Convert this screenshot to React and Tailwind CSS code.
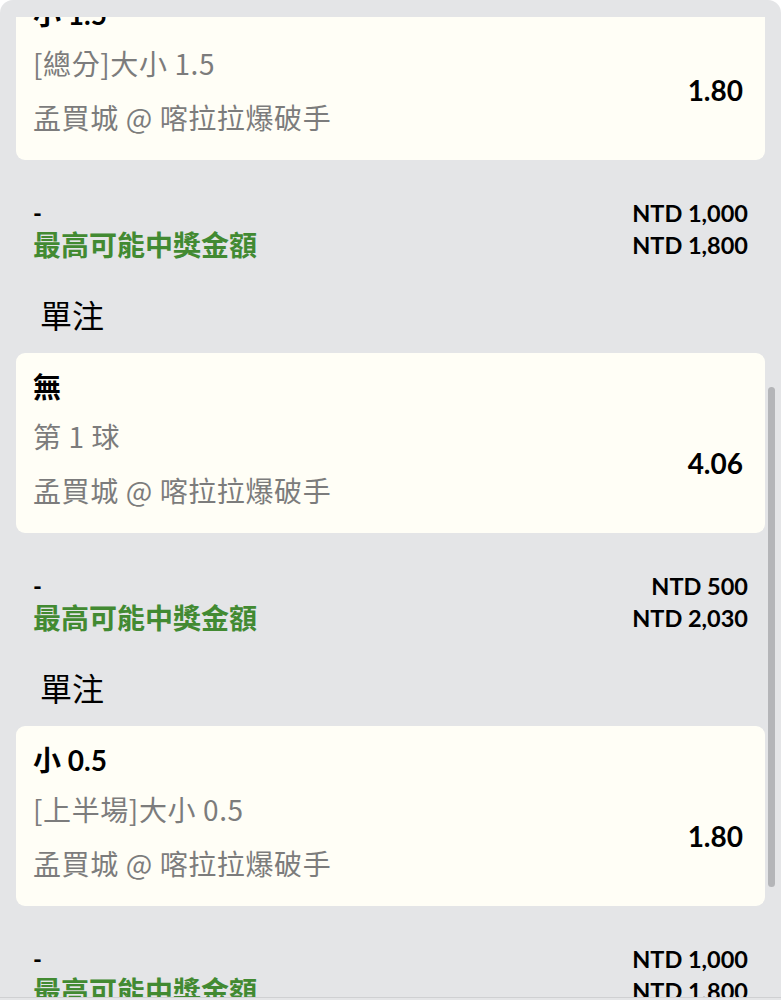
import React from 'react';

const latin = { fontFamily: 'Lato, "Noto Sans CJK TC", sans-serif' };
const cjk = { fontFamily: '"Noto Sans CJK TC", "Noto Sans", sans-serif' };

const bets = [
  { title: '小 1.5', market: '[總分]大小 1.5', odds: '1.80', stake: 'NTD 1,000', win: 'NTD 1,800' },
  { title: '無', market: '第 1 球', odds: '4.06', stake: 'NTD 500', win: 'NTD 2,030' },
  { title: '小 0.5', market: '[上半場]大小 0.5', odds: '1.80', stake: 'NTD 1,000', win: 'NTD 1,800' },
];

const BetCard = ({ title, market, odds }) => (
  <div className="mx-4 rounded-[9px] bg-[#fffef6] pb-[23px] pl-[17px] pr-[22px] pt-[14px]">
    <div className="text-[28px] font-bold leading-[40px] text-black" style={latin}>
      {title}
    </div>
    <div className="mt-[9px] flex items-center justify-between">
      <div className="text-[28px] leading-[40px] tracking-[0.6px] text-[#7c7c7c]" style={cjk}>
        <div>{market}</div>
        <div className="mt-[14px]">孟買城 @ 喀拉拉爆破手</div>
      </div>
      <div className="text-[28px] font-bold text-black" style={latin}>
        {odds}
      </div>
    </div>
  </div>
);

const Summary = ({ stake, win }) => (
  <div className="mt-[37px] flex justify-between px-[33px] text-black" style={latin}>
    <div>
      <div className="text-[24px] font-bold leading-[32px]">-</div>
      <div className="text-[28px] font-bold leading-[32px] text-[#428a32]">最高可能中獎金額</div>
    </div>
    <div className="text-right text-[23.5px] font-bold leading-[32px]">
      <div>{stake}</div>
      <div>{win}</div>
    </div>
  </div>
);

export default function App() {
  return (
    <div className="h-[1000px] w-full overflow-hidden bg-white">
      <div className="relative flex h-full flex-col rounded-t-[13px] bg-[#e4e5e7] pt-[17px]">
        <div className="flex-1 overflow-hidden">
          <div className="-mt-[37px]">
            {bets.map((b, i) => (
              <div key={i}>
                {i > 0 && (
                  <>
                    <div className="mt-[33px] pl-[40px] text-[32px] leading-[40px] text-black" style={cjk}>
                      單注
                    </div>
                    <div className="h-[19px]" />
                  </>
                )}
                <BetCard {...b} />
                <Summary {...b} />
              </div>
            ))}
          </div>
        </div>
        <div className="h-[3px] border-t border-[#cfd0d2] bg-[#e4e5e7]" />
        <div className="absolute right-[6px] top-[387px] h-[500px] w-[7px] rounded-full bg-[#b4b5b8]" />
      </div>
    </div>
  );
}
